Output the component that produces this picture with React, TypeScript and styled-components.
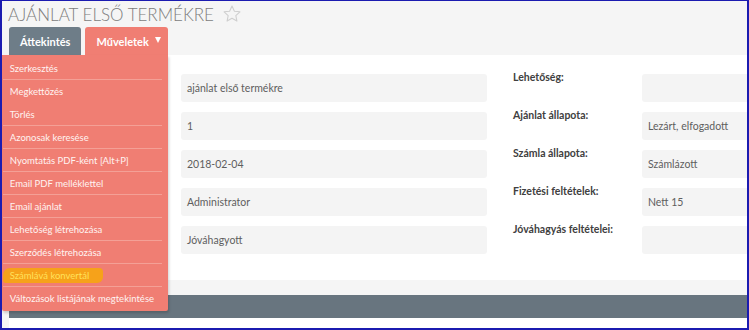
import React from "react";
import styled, { createGlobalStyle } from "styled-components";

const Global = createGlobalStyle`
  html, body { margin: 0; padding: 0; background: #ffffff; }
  body { font-family: Lato, "Open Sans", "Liberation Sans", sans-serif; }
  * { box-sizing: border-box; }
`;

const Frame = styled.div`
  position: relative;
  width: 749px;
  height: 330px;
  border-style: solid;
  border-color: #1b1bb0;
  border-width: 1px 2px 2px 2px;
  background: #f5f5f5;
  overflow: hidden;
  display: flex;
  flex-direction: column;
`;

const TitleRow = styled.div`
  height: 26px;
  display: flex;
  align-items: center;
  gap: 8px;
  padding-left: 6px;
  flex-shrink: 0;
`;

const Title = styled.h1`
  margin: 0;
  font-family: Lato, "Liberation Sans", sans-serif;
  font-weight: 300;
  font-size: 17px;
  line-height: 22px;
  color: #7d7d7d;
  white-space: nowrap;
  padding-top: 2px;
`;

const TabBar = styled.div`
  display: flex;
  gap: 4px;
  margin-left: 7px;
  height: 28px;
  flex-shrink: 0;
  position: relative;
  z-index: 2;
`;

const Tab = styled.div<{ $active?: boolean }>`
  position: relative;
  display: flex;
  align-items: center;
  gap: 6px;
  height: 28px;
  padding: 0 ${(p) => (p.$active ? "7px" : "11px")} 0 11px;
  border-radius: 3px 3px 0 0;
  background: ${(p) => (p.$active ? "#f07e73" : "#6e7d88")};
  color: #ffffff;
  font-size: 11px;
  font-weight: 700;
  white-space: nowrap;
`;

const Caret = styled.span`
  display: inline-block;
  width: 0;
  height: 0;
  border-left: 3.5px solid transparent;
  border-right: 3.5px solid transparent;
  border-top: 6px solid #ffffff;
  margin-top: -3px;
`;

const Menu = styled.ul`
  position: absolute;
  top: 100%;
  right: 0;
  width: 166px;
  margin: 0;
  padding: 2px 0 1px 0;
  list-style: none;
  background: #f07e73;
  box-shadow: 1px 2px 3px rgba(0, 0, 0, 0.18);
  border-radius: 0 0 2px 2px;
  font-weight: 400;
`;

const MenuItem = styled.li<{ $sep?: boolean }>`
  height: 23px;
  margin: 0 6px 0 1px;
  padding-left: 7px;
  display: flex;
  align-items: center;
  font-size: 9.5px;
  font-weight: 400;
  color: #fff3f1;
  border-bottom: 1px solid ${(p) => (p.$sep ? "#f4a096" : "transparent")};
  white-space: nowrap;
`;

const Marker = styled.span`
  display: inline-block;
  margin-left: -7px;
  padding: 2px 14px 2px 7px;
  background: #f6a21a;
  border-radius: 7px 4px 6px 3px;
  color: #ffe15a;
`;

const Panel = styled.div`
  margin-left: 7px;
  background: #ffffff;
  height: 225px;
  flex-shrink: 0;
  padding-top: 19px;
  display: flex;
  gap: 25px;
`;

const FieldColumn = styled.div<{ $label: number }>`
  display: grid;
  grid-template-columns: ${(p) => p.$label}px 306px;
  grid-auto-rows: 28px;
  row-gap: 10px;
  flex-shrink: 0;
`;

const Label = styled.div`
  font-size: 10.5px;
  font-weight: 700;
  color: #404040;
  line-height: 12px;
  margin-top: -3px;
  padding-left: 1px;
  white-space: nowrap;
`;

const Value = styled.div`
  background: #f4f4f4;
  border-radius: 3px;
  display: flex;
  align-items: center;
  padding-left: 6px;
  font-size: 10.5px;
  color: #5e5e5e;
  white-space: nowrap;
`;

const Gap = styled.div`
  height: 15px;
  flex-shrink: 0;
`;

const DarkBar = styled.div`
  margin-left: 7px;
  height: 23px;
  background: #68757f;
  flex-shrink: 0;
`;

const Footer = styled.div`
  margin-left: 7px;
  flex: 1;
  background: #ffffff;
`;

const Star = () => (
  <svg width="20" height="20" viewBox="0 0 24 24" fill="none" stroke="#cfcfcf" strokeWidth="1.3" strokeLinejoin="round">
    <polygon points="12,2.5 14.9,8.6 21.5,9.4 16.6,13.9 17.9,20.5 12,17.2 6.1,20.5 7.4,13.9 2.5,9.4 9.1,8.6" />
  </svg>
);

const menuItems: { text: string; sep?: boolean; mark?: boolean }[] = [
  { text: "Szerkesztés", sep: true },
  { text: "Megkettőzés" },
  { text: "Törlés", sep: true },
  { text: "Azonosak keresése", sep: true },
  { text: "Nyomtatás PDF-ként [Alt+P]", sep: true },
  { text: "Email PDF melléklettel", sep: true },
  { text: "Email ajánlat", sep: true },
  { text: "Lehetőség létrehozása", sep: true },
  { text: "Szerződés létrehozása", sep: true },
  { text: "Számlává konvertál", sep: true, mark: true },
  { text: "Változások listájának megtekintése" },
];

const leftFields = [
  ["name", "ajánlat első termékre"],
  ["number", "1"],
  ["valid", "2018-02-04"],
  ["owner", "Administrator"],
  ["approval", "Jóváhagyott"],
];

const rightFields = [
  ["Lehetőség:", ""],
  ["Ajánlat állapota:", "Lezárt, elfogadott"],
  ["Számla állapota:", "Számlázott"],
  ["Fizetési feltételek:", "Nett 15"],
  ["Jóváhagyás feltételei:", ""],
];

export default function App() {
  return (
    <>
      <Global />
      <Frame>
        <TitleRow>
          <Title>AJÁNLAT ELSŐ TERMÉKRE</Title>
          <Star />
        </TitleRow>
        <TabBar>
          <Tab>Áttekintés</Tab>
          <Tab $active>
            Műveletek <Caret />
            <Menu>
              {menuItems.map((m) => (
                <MenuItem key={m.text} $sep={m.sep}>
                  {m.mark ? <Marker>{m.text}</Marker> : m.text}
                </MenuItem>
              ))}
            </Menu>
          </Tab>
        </TabBar>
        <Panel>
          <FieldColumn $label={172}>
            {leftFields.map(([k, v]) => (
              <React.Fragment key={k}>
                <Label />
                <Value>{v}</Value>
              </React.Fragment>
            ))}
          </FieldColumn>
          <FieldColumn $label={130}>
            {rightFields.map(([l, v]) => (
              <React.Fragment key={l}>
                <Label>{l}</Label>
                <Value>{v}</Value>
              </React.Fragment>
            ))}
          </FieldColumn>
        </Panel>
        <Gap />
        <DarkBar />
        <Footer />
      </Frame>
    </>
  );
}
